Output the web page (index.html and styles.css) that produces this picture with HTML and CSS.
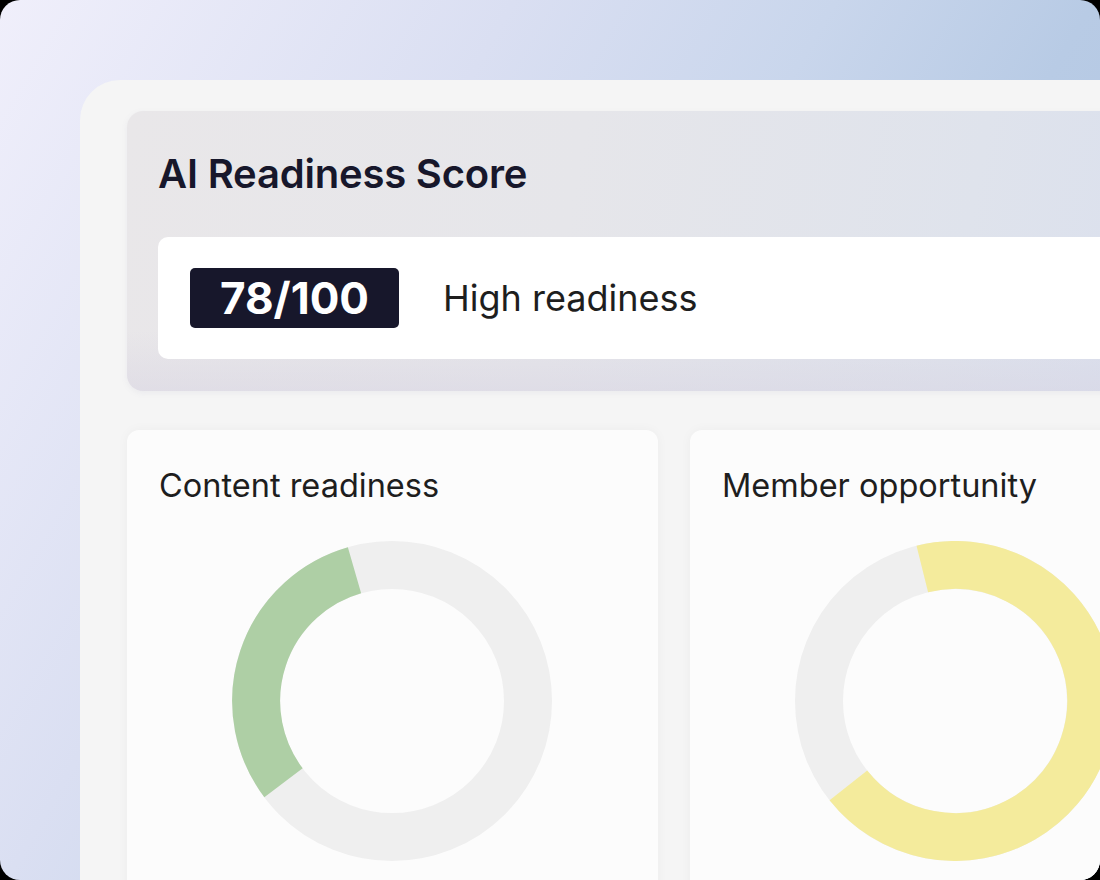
FILE: index.html
```html
<!DOCTYPE html>
<html lang="en">
<head>
    <meta charset="UTF-8">
    <meta name="viewport" content="width=device-width, initial-scale=1.0">
    <title>AI Readiness Score</title>
    <link rel="stylesheet" href="styles.css">
</head>
<body>
    <div class="frame">
        <div class="panel">
            <!-- Score summary -->
            <section class="score-card">
                <h1 class="score-title">AI Readiness Score</h1>
                <div class="score-row">
                    <span class="score-badge">78/100</span>
                    <span class="score-label">High readiness</span>
                </div>
            </section>

            <!-- Breakdown charts -->
            <div class="metrics">
                <section class="metric-card">
                    <h2 class="metric-title">Content readiness</h2>
                    <svg class="donut" width="320" height="320" viewBox="0 0 320 320">
                        <circle cx="160" cy="160" r="136" fill="none" stroke="#efefef" stroke-width="48"/>
                        <path d="M 122.5 29.3 A 136 136 0 0 0 51.5 241.8" fill="none" stroke="#aecfa5" stroke-width="48"/>
                    </svg>
                </section>
                <section class="metric-card">
                    <h2 class="metric-title">Member opportunity</h2>
                    <svg class="donut" width="320" height="320" viewBox="0 0 320 320">
                        <circle cx="160" cy="160" r="136" fill="none" stroke="#efefef" stroke-width="48"/>
                        <path d="M 127.3 28 A 136 136 0 1 1 53.4 244.3" fill="none" stroke="#f4eb9c" stroke-width="48"/>
                    </svg>
                </section>
            </div>
        </div>
    </div>
</body>
</html>
```

FILE: styles.css
```css
html, body {
    margin: 0;
    padding: 0;
    background: #000;
}

body {
    width: 1100px;
    height: 880px;
    font-family: Inter, 'Noto Sans', sans-serif;
}

.frame {
    width: 1100px;
    height: 880px;
    border-radius: 20px;
    overflow: hidden;
    background: linear-gradient(120deg, #f0effb 0%, #dadff2 32%, #c9d6ec 52%, #b8cbe5 68%, #adc2e0 100%);
    padding: 80px 0 0 80px;
    box-sizing: border-box;
}

/* Main panel, runs off the right and bottom edge */
.panel {
    width: 1140px;
    height: 820px;
    background: #f5f5f5;
    border-top-left-radius: 40px;
    padding: 31px 0 0 47px;
    box-sizing: border-box;
}

/* Score card */
.score-card {
    width: 1100px;
    height: 280px;
    border-radius: 16px;
    padding: 40px 0 0 31px;
    box-sizing: border-box;
    background: linear-gradient(100deg, #e9e7e9 0%, #e6e6ea 40%, #dfe3ec 75%, #d9dfee 100%);
    box-shadow: 0 2px 6px rgba(120, 110, 150, 0.08);
    position: relative;
}

.score-card::after {
    content: '';
    position: absolute;
    left: 0;
    right: 0;
    bottom: 0;
    height: 60px;
    border-radius: 0 0 16px 16px;
    background: linear-gradient(to bottom, rgba(220, 216, 228, 0), rgba(214, 210, 226, 0.45));
    pointer-events: none;
}

.score-title {
    margin: 0;
    font-size: 40px;
    font-weight: 600;
    line-height: 46px;
    color: #17172b;
    letter-spacing: -0.2px;
}

.score-row {
    position: relative;
    z-index: 1;
    margin-top: 40px;
    height: 122px;
    background: #fff;
    border-radius: 10px;
    display: flex;
    align-items: center;
    padding-left: 32px;
    gap: 44px;
}

.score-badge {
    width: 209px;
    height: 60px;
    border-radius: 5px;
    background: #17172b;
    color: #fff;
    font-size: 44px;
    font-weight: 700;
    display: flex;
    align-items: center;
    justify-content: center;
}

.score-label {
    font-size: 36px;
    color: #1e1e1e;
}

/* Chart cards */
.metrics {
    display: flex;
    gap: 32px;
    margin-top: 39px;
}

.metric-card {
    flex: none;
    width: 531px;
    height: 500px;
    background: #fcfcfc;
    border-radius: 12px;
    padding: 36px 0 0 32px;
    box-sizing: border-box;
    box-shadow: 0 0 12px rgba(0, 0, 0, 0.04);
}

.metric-title {
    margin: 0;
    font-size: 32.5px;
    font-weight: 400;
    line-height: 40px;
    color: #1e1e1e;
}

.donut {
    display: block;
    margin: 35px 0 0 73px;
}
```
